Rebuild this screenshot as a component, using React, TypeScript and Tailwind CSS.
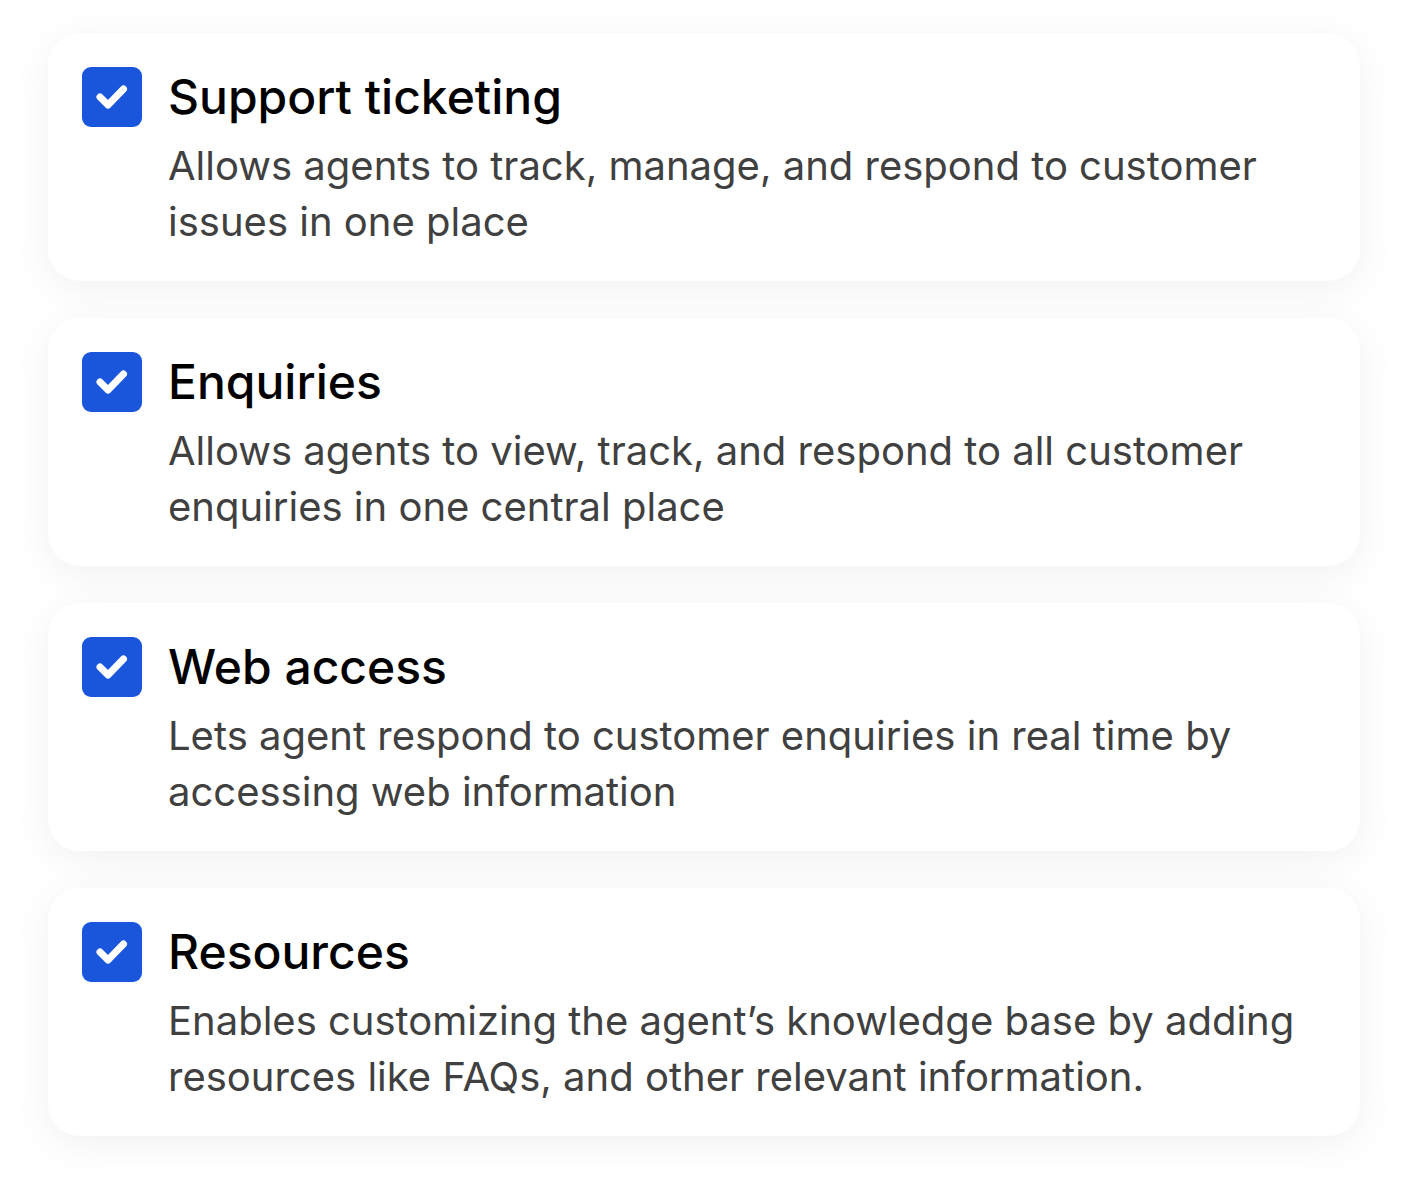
import React from "react"

type Feature = {
    title: string;
    description: string;
};

const features: Feature[] = [
    {
        title: "Support ticketing",
        description: "Allows agents to track, manage, and respond to customer issues in one place",
    },
    {
        title: "Enquiries",
        description: "Allows agents to view, track, and respond to all customer enquiries in one central place",
    },
    {
        title: "Web access",
        description: "Lets agent respond to customer enquiries in real time by accessing web information",
    },
    {
        title: "Resources",
        description: "Enables customizing the agent\u2019s knowledge base by adding resources like FAQs, and other relevant information.",
    },
];

function CheckBox() {
    return (
        <div className="w-[60px] h-[60px] shrink-0 rounded-[9px] bg-[#1a56db] flex items-center justify-center">
            <svg width="60" height="60" viewBox="0 0 60 60" fill="none">
                <path d="M18 30 L26 38 L41.5 22" stroke="white" strokeWidth="7" strokeLinecap="round" strokeLinejoin="round" />
            </svg>
        </div>
    )
}

function FeatureCard({ feature }: { feature: Feature }) {
    return (
        <div className="bg-white rounded-[32px] shadow-[0_8px_40px_rgba(0,0,0,0.06)] h-[248px] pt-[34px] pl-[34px] pr-[30px] flex gap-[26px]">
            <CheckBox />
            <div className="flex flex-col">
                <h3 className="text-[48px] leading-[60px] text-black font-medium">{feature.title}</h3>
                <p className="mt-[11px] text-[40px] leading-[56px] text-[#404040]">{feature.description}</p>
            </div>
        </div>
    )
}

export default function App() {
    return (
        <div className="w-[1408px] min-h-[1198px] bg-white px-[48px] pt-[33px] flex flex-col gap-[37px] font-['Inter',sans-serif]">
            {features.map((f, i) => <FeatureCard feature={f} key={i} />)}
        </div>
    )
}
